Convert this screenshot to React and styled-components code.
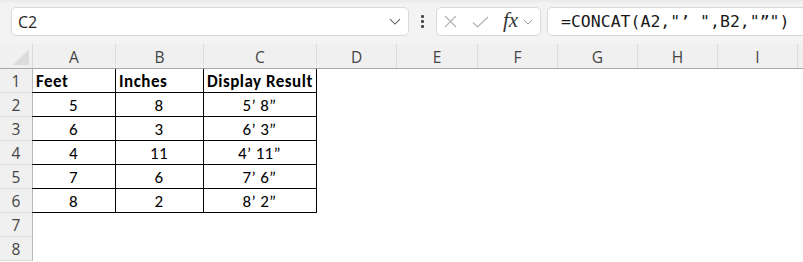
import React from "react"
import styled, { createGlobalStyle } from "styled-components"

const GlobalStyle = createGlobalStyle`
  html, body {
    margin: 0;
    padding: 0;
    background: #ffffff;
    overflow: hidden;
  }
`

const columns = [
  { name: "A", width: 83 },
  { name: "B", width: 88 },
  { name: "C", width: 113 },
  { name: "D", width: 80 },
  { name: "E", width: 81 },
  { name: "F", width: 80 },
  { name: "G", width: 80 },
  { name: "H", width: 80 },
  { name: "I", width: 80 },
  { name: "", width: 40 }
]

const data = [
  ["Feet", "Inches", "Display Result"],
  ["5", "8", "5’ 8”"],
  ["6", "3", "6’ 3”"],
  ["4", "11", "4’ 11”"],
  ["7", "6", "7’ 6”"],
  ["8", "2", "8’ 2”"]
]

const ChevronDown = ({ size = 12, color = "#5f5f5f" }) => (
  <svg width={size} height={size * 0.6} viewBox="0 0 12 7" fill="none">
    <path d="M1 1l5 5 5-5" stroke={color} strokeWidth="1.1" />
  </svg>
)

export default function App() {
  return (
    <>
      <GlobalStyle />
      <Page>
        <TopBar>
          <NameBox>
            <span>C2</span>
            <ChevronDown />
          </NameBox>
          <Dots>
            <i />
            <i />
            <i />
          </Dots>
          <FuncBox>
            <svg width="13" height="13" viewBox="0 0 13 13">
              <path d="M1 1l11 11M12 1L1 12" stroke="#b4b4b4" strokeWidth="1.2" />
            </svg>
            <svg width="17" height="12" viewBox="0 0 17 12">
              <path d="M1 6.5l4.5 4.5L16 1" stroke="#b4b4b4" strokeWidth="1.2" fill="none" />
            </svg>
            <Fx>fx</Fx>
            <ChevronDown size={10} color="#8a8a8a" />
          </FuncBox>
          <FormulaBox>=CONCAT(A2,"’ ",B2,"”")</FormulaBox>
        </TopBar>

        <Sheet>
          <HeaderRow>
            <Corner>
              <Triangle />
            </Corner>
            {columns.map((c) => (
              <ColHeader key={c.name} $w={c.width}>
                {c.name}
              </ColHeader>
            ))}
          </HeaderRow>
          {Array.from({ length: 8 }).map((_, r) => (
            <Row key={r}>
              <RowHeader>{r + 1}</RowHeader>
              {columns.map((c, ci) => {
                const value = data[r] && data[r][ci]
                const boxed = r < data.length && ci < 3
                return (
                  <Cell
                    key={c.name + r}
                    $w={c.width}
                    $boxed={boxed}
                    $head={r === 0}
                  >
                    {value}
                  </Cell>
                )
              })}
            </Row>
          ))}
        </Sheet>
      </Page>
    </>
  )
}

const Page = styled.div`
  width: 803px;
  height: 262px;
  overflow: hidden;
`

const TopBar = styled.div`
  height: 44px;
  box-sizing: border-box;
  padding: 7px 0 0 11px;
  display: flex;
  align-items: flex-start;
  background: linear-gradient(#e9e9e9, #f3f3f3 4px);
`

const Box = styled.div`
  height: 29px;
  box-sizing: border-box;
  background: #ffffff;
  border: 1px solid #d9d9d9;
  border-radius: 5px;
  display: flex;
  align-items: center;
`

const NameBox = styled(Box)`
  width: 398px;
  padding: 0 7px 0 6px;
  justify-content: space-between;
  font-family: "Open Sans", "Noto Sans", sans-serif;
  font-size: 16px;
  color: #1f1f1f;
`

const Dots = styled.div`
  width: 27px;
  height: 29px;
  display: flex;
  flex-direction: column;
  align-items: center;
  justify-content: center;
  gap: 2px;

  i {
    width: 3px;
    height: 3px;
    background: #4a4a4a;
    border-radius: 1px;
  }
`

const FuncBox = styled(Box)`
  width: 105px;
  padding: 0 0 0 7px;

  svg:nth-child(1) {
    margin-right: 15px;
  }
  svg:nth-child(2) {
    margin-right: 14px;
  }
`

const Fx = styled.span`
  font-family: "Liberation Serif", "DejaVu Serif", serif;
  font-style: italic;
  font-size: 21px;
  color: #333333;
  margin-right: 5px;
  margin-top: -3px;
`

const FormulaBox = styled(Box)`
  margin-left: 6px;
  flex: 1;
  border-right: none;
  border-radius: 5px 0 0 5px;
  padding-left: 13px;
  font-family: "DejaVu Sans Mono", "Liberation Mono", monospace;
  font-size: 16.5px;
  color: #1a1a1a;
`

const Sheet = styled.div`
  display: flex;
  flex-direction: column;
`

const HeaderRow = styled.div`
  display: flex;
  height: 24px;
  background: #f0f0f0;
  border-bottom: 1px solid #a8a8a8;
`

const Corner = styled.div`
  width: 33px;
  flex: none;
  box-sizing: border-box;
  border-right: 1px solid #dadada;
  position: relative;
`

const Triangle = styled.div`
  position: absolute;
  right: 3px;
  bottom: 3px;
  width: 0;
  height: 0;
  border-left: 16px solid transparent;
  border-bottom: 16px solid #dcdcdc;
`

const ColHeader = styled.div`
  width: ${(p) => p.$w}px;
  flex: none;
  box-sizing: border-box;
  border-right: 1px solid #dcdcdc;
  display: flex;
  align-items: center;
  justify-content: center;
  padding-top: 2px;
  font-family: "Open Sans", "Noto Sans", sans-serif;
  font-size: 15.5px;
  color: #444444;
`

const Row = styled.div`
  display: flex;
  height: 24px;
`

const RowHeader = styled.div`
  width: 33px;
  flex: none;
  box-sizing: border-box;
  background: #f0f0f0;
  border-right: 1px solid #b8b8b8;
  border-bottom: 1px solid #dcdcdc;
  display: flex;
  align-items: center;
  justify-content: center;
  padding-top: 1px;
  font-family: "Open Sans", "Noto Sans", sans-serif;
  font-size: 15.5px;
  color: #444444;
`

const Cell = styled.div`
  flex: none;
  box-sizing: border-box;
  display: flex;
  align-items: center;
  justify-content: ${(p) => (p.$head ? "flex-start" : "center")};
  padding-left: ${(p) => (p.$head ? "4px" : "0")};
  padding-top: 2px;
  font-family: "Carlito", "Lato", sans-serif;
  font-size: 17px;
  font-weight: ${(p) => (p.$head ? 700 : 400)};
  letter-spacing: ${(p) => (p.$head ? "0.5px" : "0.3px")};
  color: #000000;
  border-right: ${(p) => (p.$boxed ? "1px solid #000" : "none")};
  border-bottom: ${(p) => (p.$boxed ? "1px solid #000" : "none")};
  margin-left: ${(p) => (p.$boxed ? "-1px" : "0")};
  width: ${(p) => (p.$boxed ? p.$w + 1 : p.$w)}px;
`
